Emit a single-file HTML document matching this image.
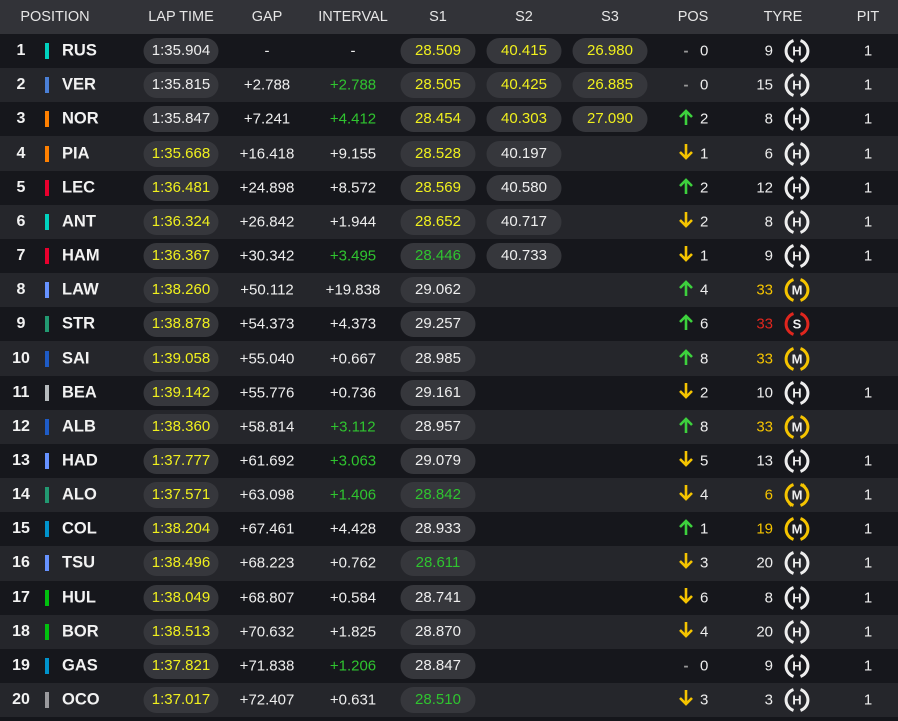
<!DOCTYPE html>
<html><head><meta charset="utf-8">
<style>
*{margin:0;padding:0;box-sizing:border-box}
body{width:898px;height:721px;background:#15161b;font-family:"Liberation Sans","DejaVu Sans",sans-serif;color:#eee;position:relative;overflow:hidden}
.hdr{position:absolute;left:0;top:0;width:898px;height:34px;background:#323338;font-size:14.5px;color:#e6e6e6}
.hdr span,.row span{position:absolute;top:50%;transform:translate(-50%,-50%);white-space:nowrap}
.row{position:absolute;left:0;width:898px;height:34.2px;font-size:15px}
.row.e{background:#25262b}.row.o{background:#16171c}
.num{font-weight:bold;font-size:16px;color:#f2f2f2}
.bar{width:4px;height:16px}
.code{font-weight:bold;font-size:16.5px;color:#f2f2f2;transform:translate(0,-50%)!important;left:62px}
.pill{background:#36373c;border-radius:13px;height:26px;line-height:26px;text-align:center;width:75px}
.y{color:#f0f01e}.g{color:#2fc42f}.w{color:#eee}.my{color:#f5c400}.r{color:#e0261e}
.pn{transform:translate(0,-50%)!important;left:700px}
.tn{transform:translate(-100%,-50%)!important;left:773px}
</style></head><body>
<div class="hdr">
<span style="left:55px">POSITION</span><span style="left:181px">LAP TIME</span><span style="left:267px">GAP</span><span style="left:353px">INTERVAL</span><span style="left:438px">S1</span><span style="left:524px">S2</span><span style="left:610px">S3</span><span style="left:693px">POS</span><span style="left:783px">TYRE</span><span style="left:868px">PIT</span>
</div>
<div id="t"></div>
<script>
var D=[
["RUS","#00d2be","1:35.904","w","-","-","w","28.509","y","40.415","26.980","-","0","9","H","1"],
["VER","#4a7fd6","1:35.815","w","+2.788","+2.788","g","28.505","y","40.425","26.885","-","0","15","H","1"],
["NOR","#ff8000","1:35.847","w","+7.241","+4.412","g","28.454","y","40.303","27.090","u","2","8","H","1"],
["PIA","#ff8000","1:35.668","y","+16.418","+9.155","w","28.528","y","40.197w","","d","1","6","H","1"],
["LEC","#e8002d","1:36.481","y","+24.898","+8.572","w","28.569","y","40.580w","","u","2","12","H","1"],
["ANT","#00d2be","1:36.324","y","+26.842","+1.944","w","28.652","y","40.717w","","d","2","8","H","1"],
["HAM","#e8002d","1:36.367","y","+30.342","+3.495","g","28.446","g","40.733w","","d","1","9","H","1"],
["LAW","#6692ff","1:38.260","y","+50.112","+19.838","w","29.062","w","","","u","4","33","M",""],
["STR","#229971","1:38.878","y","+54.373","+4.373","w","29.257","w","","","u","6","33","S",""],
["SAI","#1e5bc6","1:39.058","y","+55.040","+0.667","w","28.985","w","","","u","8","33","M",""],
["BEA","#b6babd","1:39.142","y","+55.776","+0.736","w","29.161","w","","","d","2","10","H","1"],
["ALB","#1e5bc6","1:38.360","y","+58.814","+3.112","g","28.957","w","","","u","8","33","M",""],
["HAD","#6692ff","1:37.777","y","+61.692","+3.063","g","29.079","w","","","d","5","13","H","1"],
["ALO","#229971","1:37.571","y","+63.098","+1.406","g","28.842","g","","","d","4","6","MR","1"],
["COL","#0093cc","1:38.204","y","+67.461","+4.428","w","28.933","w","","","u","1","19","M","1"],
["TSU","#6692ff","1:38.496","y","+68.223","+0.762","w","28.611","g","","","d","3","20","H","1"],
["HUL","#01c00e","1:38.049","y","+68.807","+0.584","w","28.741","w","","","d","6","8","H","1"],
["BOR","#01c00e","1:38.513","y","+70.632","+1.825","w","28.870","w","","","d","4","20","H","1"],
["GAS","#0093cc","1:37.821","y","+71.838","+1.206","g","28.847","w","","","-","0","9","H","1"],
["OCO","#9a9a9e","1:37.017","y","+72.407","+0.631","w","28.510","g","","","d","3","3","H","1"]];
function tyre(t){var c=t[0]=="H"?"#eeeeee":t[0]=="M"?"#f5c400":"#e0261e";var L=t[0];
var s='<svg width="28" height="28" viewBox="0 0 28 28"><path d="M10.5 3.6 A11 11 0 0 0 10.5 24.4" fill="none" stroke="'+c+'" stroke-width="3"/><path d="M17.5 3.6 A11 11 0 0 1 17.5 24.4" fill="none" stroke="'+c+'" stroke-width="3"/>';
if(t=="MR")s+='<path d="M20 2 l3 3 l-4 1z M8 26 l-3 -3 l4 -1z" fill="'+c+'"/>';
s+='<text x="14" y="18.6" text-anchor="middle" font-family="Liberation Sans" font-weight="bold" font-size="13" fill="#eee">'+L+'</text></svg>';return s;}
function arrow(a){if(a=="-")return '<span style="left:686px;color:#999;font-weight:bold">-</span>';
if(a=="u")return '<span style="left:686px"><svg width="16" height="18" viewBox="0 0 16 18"><path d="M8 17V3M2 9l6-6 6 6" fill="none" stroke="#3dd13d" stroke-width="2.6"/></svg></span>';
return '<span style="left:686px"><svg width="16" height="18" viewBox="0 0 16 18"><path d="M8 1v14M2 9l6 6 6-6" fill="none" stroke="#f5c400" stroke-width="2.6"/></svg></span>';}
var h='';
D.forEach(function(d,i){
var top=34+i*34.16;
var s2=d[9],s2c="y";if(s2.slice(-1)=="w"){s2=s2.slice(0,-1);s2c="w";}
var tc=d[14][0]=="H"?"w":d[14][0]=="M"?"my":"r";
h+='<div class="row '+(i%2?'e':'o')+'" style="top:'+top+'px">'+
'<span class="num" style="left:21px">'+(i+1)+'</span>'+
'<span class="bar" style="left:47px;background:'+d[1]+'"></span>'+
'<span class="code">'+d[0]+'</span>'+
'<span class="pill '+d[3]+'" style="left:181px">'+d[2]+'</span>'+
'<span class="w" style="left:267px">'+d[4]+'</span>'+
'<span class="'+d[6]+'" style="left:353px">'+d[5]+'</span>'+
'<span class="pill '+d[8]+'" style="left:438px">'+d[7]+'</span>'+
(s2?'<span class="pill '+s2c+'" style="left:524px">'+s2+'</span>':'')+
(d[10]?'<span class="pill y" style="left:610px">'+d[10]+'</span>':'')+
arrow(d[11])+'<span class="pn w">'+d[12]+'</span>'+
'<span class="tn '+tc+'">'+d[13]+'</span>'+
'<span style="left:797px;line-height:0">'+tyre(d[14])+'</span>'+
'<span class="w" style="left:868px">'+d[15]+'</span></div>';});
document.getElementById('t').innerHTML=h;
</script>
</body></html>
